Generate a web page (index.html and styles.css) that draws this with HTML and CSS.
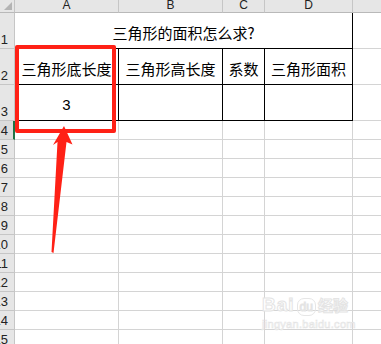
FILE: index.html
```html
<!DOCTYPE html>
<html lang="zh-CN">
<head>
<meta charset="utf-8">
<title>三角形的面积怎么求?</title>
<link rel="stylesheet" href="styles.css">
</head>
<body>
<div class="sheet">
  <div class="grid">
    <!-- column headers -->
    <div class="corner"><span class="corner-tri"></span></div>
    <div class="colhead">A</div>
    <div class="colhead">B</div>
    <div class="colhead">C</div>
    <div class="colhead">D</div>
    <div class="colhead"></div>

    <!-- row 1: merged title -->
    <div class="rowhead">1</div>
    <div class="cell title boxed span4">三角形的面积怎么求?</div>
    <div class="cell"></div>

    <!-- row 2: field names -->
    <div class="rowhead">2</div>
    <div class="cell boxed">三角形底长度</div>
    <div class="cell boxed">三角形高长度</div>
    <div class="cell boxed">系数</div>
    <div class="cell boxed">三角形面积</div>
    <div class="cell"></div>

    <!-- row 3: values -->
    <div class="rowhead">3</div>
    <div class="cell boxed num">3</div>
    <div class="cell boxed"></div>
    <div class="cell boxed"></div>
    <div class="cell boxed"></div>
    <div class="cell"></div>

    <div class="rowhead active">4</div><div class="cell"></div><div class="cell"></div><div class="cell"></div><div class="cell"></div><div class="cell"></div>
    <div class="rowhead">5</div><div class="cell"></div><div class="cell"></div><div class="cell"></div><div class="cell"></div><div class="cell"></div>
    <div class="rowhead">6</div><div class="cell"></div><div class="cell"></div><div class="cell"></div><div class="cell"></div><div class="cell"></div>
    <div class="rowhead">7</div><div class="cell"></div><div class="cell"></div><div class="cell"></div><div class="cell"></div><div class="cell"></div>
    <div class="rowhead">8</div><div class="cell"></div><div class="cell"></div><div class="cell"></div><div class="cell"></div><div class="cell"></div>
    <div class="rowhead">9</div><div class="cell"></div><div class="cell"></div><div class="cell"></div><div class="cell"></div><div class="cell"></div>
    <div class="rowhead">10</div><div class="cell"></div><div class="cell"></div><div class="cell"></div><div class="cell"></div><div class="cell"></div>
    <div class="rowhead">11</div><div class="cell"></div><div class="cell"></div><div class="cell"></div><div class="cell"></div><div class="cell"></div>
    <div class="rowhead">12</div><div class="cell"></div><div class="cell"></div><div class="cell"></div><div class="cell"></div><div class="cell"></div>
    <div class="rowhead">13</div><div class="cell"></div><div class="cell"></div><div class="cell"></div><div class="cell"></div><div class="cell"></div>
    <div class="rowhead">14</div><div class="cell"></div><div class="cell"></div><div class="cell"></div><div class="cell"></div><div class="cell"></div>
    <div class="rowhead">15</div><div class="cell"></div><div class="cell"></div><div class="cell"></div><div class="cell"></div><div class="cell"></div>
    <div class="rowhead">16</div><div class="cell"></div><div class="cell"></div><div class="cell"></div><div class="cell"></div><div class="cell"></div>
  </div>

  <!-- annotation: highlight box around column A and an arrow pointing at it -->
  <div class="highlight"></div>
  <svg class="arrow" width="381" height="344" viewBox="0 0 381 344">
    <polygon points="64,126 72.5,144.5 66.5,142 53.5,253 51.5,252 57.5,142 53,145" fill="#ff2116"/>
  </svg>

  <!-- watermark -->
  <div class="watermark">
    <div class="wm-line"><span class="wm-bai">Bai</span><span class="wm-du">du</span><span class="wm-cn">经验</span></div>
    <div class="wm-url">jingyan.baidu.com</div>
  </div>
</div>
</body>
</html>
```

FILE: styles.css
```css
html, body {
  margin: 0;
  padding: 0;
  background: #fff;
}

body {
  width: 381px;
  height: 344px;
  overflow: hidden;
}

.sheet {
  position: relative;
  width: 381px;
  height: 344px;
  overflow: hidden;
  font-family: "Noto Sans CJK SC", "Liberation Sans", sans-serif;
  color: #000;
}

.grid {
  display: grid;
  grid-template-columns: 15px 104px 104px 42px 88px 60px;
  grid-template-rows: 13px 36px 36px 36px repeat(13, 19px);
}

.grid > div {
  box-sizing: border-box;
}

/* header strip */
.corner {
  position: relative;
  background: #e6e6e6;
  border-right: 1px solid #c4c4c4;
  border-bottom: 1px solid #b9b9b9;
}

.corner-tri {
  position: absolute;
  right: 2px;
  bottom: 2px;
  width: 0;
  height: 0;
  border-left: 8px solid transparent;
  border-bottom: 8px solid #b4b4b4;
}

.colhead {
  background: #e6e6e6;
  border-right: 1px solid #c6c6c6;
  border-bottom: 1px solid #b9b9b9;
  font-family: "Liberation Sans", sans-serif;
  font-size: 12px;
  line-height: 11px;
  text-align: center;
  color: #222;
}

.rowhead {
  display: flex;
  justify-content: flex-end;
  align-items: flex-end;
  padding-right: 6px;
  padding-bottom: 2px;
  background: #e6e6e6;
  border-right: 1px solid #c6c6c6;
  border-bottom: 1px solid #c6c6c6;
  font-family: "Liberation Sans", sans-serif;
  font-size: 13px;
  line-height: 13px;
  color: #222;
  overflow: hidden;
  white-space: nowrap;
}

.rowhead.active {
  background: #dcdcdc;
  border-right: 2px solid #217346;
  padding-right: 5px;
}

/* body cells */
.cell {
  display: flex;
  align-items: center;
  justify-content: center;
  padding-top: 4px;
  border-right: 1px solid #d4d4d4;
  border-bottom: 1px solid #d4d4d4;
  font-size: 15px;
  line-height: 18px;
  white-space: nowrap;
}

.cell.boxed {
  border-right-color: #000;
  border-bottom-color: #000;
}

.cell.span4 {
  grid-column: span 4;
}

.cell.num {
  font-family: "Liberation Sans", sans-serif;
  font-size: 15px;
}

/* red annotation */
.highlight {
  position: absolute;
  left: 15px;
  top: 45px;
  width: 101px;
  height: 88px;
  box-sizing: border-box;
  border: 4px solid #ff2116;
  border-radius: 2px;
}

.arrow {
  position: absolute;
  left: 0;
  top: 0;
}

/* faint watermark */
.watermark {
  position: absolute;
  left: 262px;
  top: 294px;
  width: 92px;
  font-family: "Liberation Sans", sans-serif;
  color: #fff;
  -webkit-text-stroke: 1px #e4e4e4;
}

.wm-line {
  display: flex;
  align-items: baseline;
  height: 21px;
}

.wm-bai {
  font-size: 19px;
  font-weight: bold;
  letter-spacing: 1px;
}

.wm-du {
  margin: 0 2px;
  padding: 1px 2px;
  font-size: 12px;
  border: 1px solid #e6e6e6;
  border-radius: 7px;
}

.wm-cn {
  font-family: "Noto Sans CJK SC", sans-serif;
  font-size: 15px;
  font-weight: bold;
}

.wm-url {
  margin-top: 3px;
  font-size: 11px;
  letter-spacing: 0.3px;
  -webkit-text-stroke: 0.6px #e4e4e4;
}
```
